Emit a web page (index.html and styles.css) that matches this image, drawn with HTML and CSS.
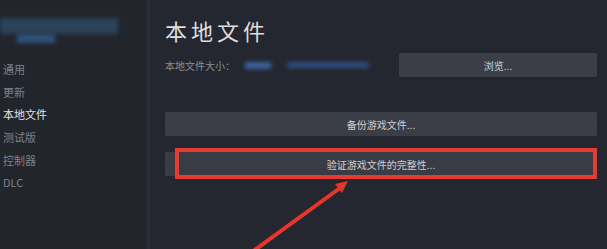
FILE: index.html
```html
<!DOCTYPE html>
<html lang="zh-CN">
<head>
    <meta charset="UTF-8">
    <meta name="viewport" content="width=device-width, initial-scale=1.0">
    <title>本地文件</title>
    <link rel="stylesheet" href="styles.css">
</head>
<body>
    <aside class="sidebar">
        <div class="game-name">
            <div class="blur blur-title"></div>
            <div class="blur blur-sub"></div>
        </div>
        <ul class="nav">
            <li>通用</li>
            <li>更新</li>
            <li class="active">本地文件</li>
            <li>测试版</li>
            <li>控制器</li>
            <li>DLC</li>
        </ul>
    </aside>
    <main class="content">
        <h1>本地文件</h1>
        <div class="size-row">
            <span class="size-label">本地文件大小：</span>
            <span class="size-value">
                <span class="blur blur-num"></span>
                <span class="blur blur-path"></span>
            </span>
            <button class="btn btn-browse">浏览...</button>
        </div>
        <button class="btn btn-wide btn-backup">备份游戏文件...</button>
        <div class="verify-wrap">
            <button class="btn btn-wide">验证游戏文件的完整性...</button>
            <div class="highlight"></div>
        </div>
    </main>
    <!-- annotation arrow -->
    <svg class="arrow" width="607" height="249" viewBox="0 0 607 249">
        <line x1="252" y1="252" x2="340" y2="188" stroke="#e8352c" stroke-width="4" stroke-linecap="round"/>
        <polygon points="348,181 342,193 335,184" fill="#e8352c"/>
    </svg>
</body>
</html>
```

FILE: styles.css
```css
/* General */
html, body {
    height: 100%;
}
body {
    margin: 0;
    display: flex;
    background-color: #24272f;
    font-family: "Noto Sans CJK SC", "Noto Sans", sans-serif;
    overflow: hidden;
}

/* Sidebar */
.sidebar {
    width: 147px;
    flex-shrink: 0;
    background-color: #22252c;
    border-right: 3px solid #2a2d35;
    padding-top: 18px;
}
.game-name {
    height: 38px;
    position: relative;
}
.blur {
    display: block;
    filter: blur(2px);
}
.blur-title {
    width: 118px;
    height: 16px;
    background-color: #2b4259;
}
.blur-sub {
    margin-left: 17px;
    width: 38px;
    height: 9px;
    background-color: #2f5278;
}
.nav {
    list-style: none;
    margin: 2px 0 0;
    padding: 0 0 0 3px;
}
.nav li {
    height: 22.7px;
    line-height: 22.7px;
    font-size: 11px;
    color: #7e828a;
}
.nav li.active {
    color: #e4e4e4;
}

/* Main */
.content {
    flex: 1;
    padding: 14px 10px 0 15px;
    position: relative;
}
h1 {
    margin: 0;
    font-size: 22px;
    font-weight: normal;
    letter-spacing: 4px;
    color: #dedede;
    line-height: 32px;
}
.size-row {
    display: flex;
    align-items: center;
    margin-top: 7px;
}
.size-label {
    font-size: 10px;
    color: #8d9098;
}
.size-value {
    display: flex;
    align-items: center;
    gap: 16px;
    margin-left: 10px;
    flex: 1;
}
.blur-num {
    width: 26px;
    height: 7px;
    background-color: #3e5fa0;
}
.blur-path {
    width: 82px;
    height: 6px;
    background-color: #2f4a82;
}
.btn {
    border: none;
    background-color: #3b3e46;
    color: #cfd0d2;
    font-family: inherit;
    font-size: 10px;
    height: 24px;
    padding: 0;
    border-radius: 2px;
}
.btn-browse {
    width: 198px;
}
.btn-wide {
    display: block;
    width: 100%;
}
.btn-backup {
    margin-top: 35px;
}
.verify-wrap {
    position: relative;
    margin-top: 16px;
}
.verify-wrap .btn {
    background-color: #393c45;
}
.highlight {
    position: absolute;
    left: 10px;
    right: 0;
    top: -4px;
    bottom: -3px;
    border: 4px solid #e63a32;
    box-sizing: border-box;
}

/* Annotation */
.arrow {
    position: absolute;
    left: 0;
    top: 0;
    pointer-events: none;
}
```
